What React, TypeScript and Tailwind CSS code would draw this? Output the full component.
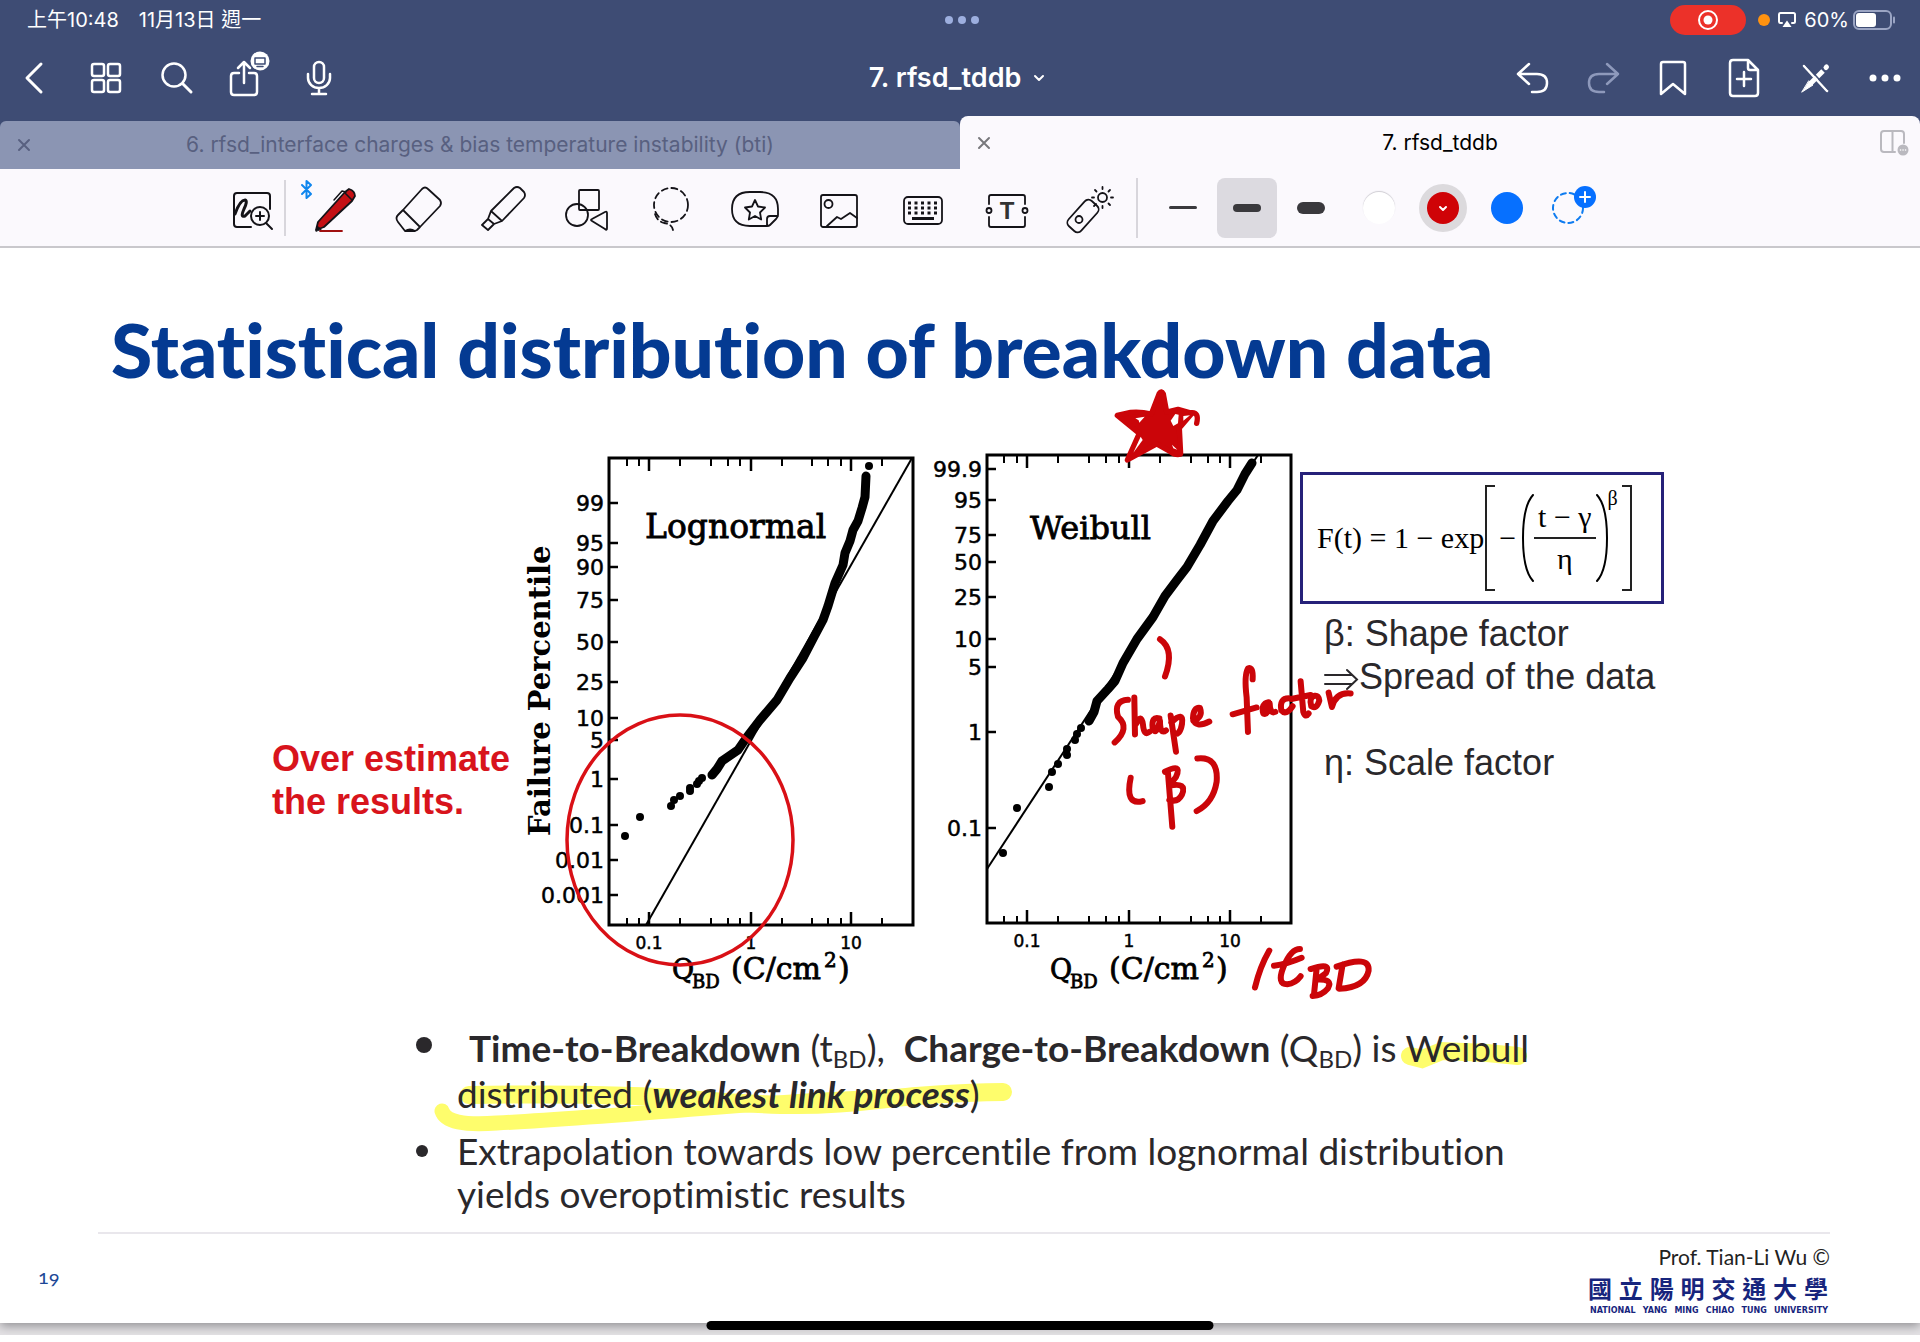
import React from "react";

type IconProps = { children: React.ReactNode; className?: string; w?: number; h?: number; sw?: number };

function Icon({ children, className = "", w = 48, h = 48, sw = 2 }: IconProps) {
  return (
    <svg
      width={w}
      height={h}
      viewBox={`0 0 ${w} ${h}`}
      fill="none"
      stroke="currentColor"
      strokeWidth={sw}
      strokeLinecap="round"
      strokeLinejoin="round"
      className={`shrink-0 overflow-visible ${className}`}
      aria-hidden="true"
    >
      {children}
    </svg>
  );
}

function StatusBar() {
  return (
    <div className="grid h-10 grid-cols-3 items-center pl-[27px] pr-6 text-xl text-white">
      <div className="flex gap-5 font-['Inter','Noto_Sans_CJK_TC',sans-serif]">
        <span>上午10:48</span>
        <span>11月13日 週一</span>
      </div>
      <div className="flex justify-center gap-[5px]">
        <i className="size-2 rounded-full bg-[#9dafdf]" />
        <i className="size-2 rounded-full bg-[#9dafdf]" />
        <i className="size-2 rounded-full bg-[#9dafdf]" />
      </div>
      <div className="flex items-center justify-end">
        <span className="mr-3 flex h-[30px] w-[76px] items-center justify-center rounded-2xl bg-[#ec3129]">
          <Icon w={22} h={22} sw={2}>
            <circle cx="11" cy="11" r="9" />
            <circle cx="11" cy="11" r="4.5" fill="currentColor" stroke="none" />
          </Icon>
        </span>
        <i className="mr-2 size-3 rounded-full bg-[#ff9210]" />
        <Icon w={18} h={18} sw={2} className="mr-2">
          <path d="M4 12H2.500Q1 12 1 10.500V3.500Q1 2 2.500 2H15.500Q17 2 17 3.500V10.500Q17 12 15.500 12H14" />
          <path d="M9 9.500 13.500 16H4.500Z" fill="currentColor" stroke="none" />
        </Icon>
        <span className="mr-1 font-['Inter',sans-serif]">60%</span>
        <Icon w={43} h={20} sw={2}>
          <rect x="1" y="1" width="37" height="18" rx="5" stroke="#9ba5c4" />
          <rect x="3" y="3" width="20" height="14" rx="3" fill="white" stroke="none" />
          <path d="M41 7.500v5" stroke="#9ba5c4" />
        </Icon>
      </div>
    </div>
  );
}

function NavButton({ label, children, className = "" }: { label: string; children: React.ReactNode; className?: string }) {
  return (
    <button type="button" aria-label={label} className={`flex h-16 items-center justify-center ${className}`}>
      {children}
    </button>
  );
}

function NavBar() {
  return (
    <div className="grid h-[76px] grid-cols-[1fr_auto_1fr] items-center text-white">
      <div className="flex items-center">
        <NavButton label="Back" className="w-[67px]">
          <Icon w={36} h={36} sw={3}><path d="M25 4 11 18 25 32" /></Icon>
        </NavButton>
        <NavButton label="Pages" className="w-[78px]">
          <Icon w={36} h={36} sw={2.5}>
            <rect x="4" y="4" width="12" height="12" rx="2" />
            <rect x="20" y="4" width="12" height="12" rx="2" />
            <rect x="4" y="20" width="12" height="12" rx="2" />
            <rect x="20" y="20" width="12" height="12" rx="2" />
          </Icon>
        </NavButton>
        <NavButton label="Search" className="w-[63px]">
          <Icon w={36} h={36} sw={3}>
            <circle cx="15" cy="15" r="11.500" strokeWidth="2.500" />
            <path d="m24 24 8 8" />
          </Icon>
        </NavButton>
        <NavButton label="Share" className="w-[71px]">
          <Icon w={36} h={40} sw={2.5}>
            <path d="M13 15H8Q5 15 5 18V34Q5 37 8 37H28Q31 37 31 34V18Q31 15 28 15H23" />
            <path d="M18 25V5M12 10l6-6 6 6" />
            <circle cx="34" cy="3" r="9.500" fill="white" stroke="none" />
            <path d="M29 0H39V6H29ZM31 8.500H37" stroke="#3e4c74" strokeWidth="1.500" />
          </Icon>
        </NavButton>
        <NavButton label="Record" className="w-[79px]">
          <Icon w={36} h={36} sw={2.5}>
            <rect x="13" y="2" width="10" height="21" rx="5" />
            <path d="M7 14v4a11 10 0 0 0 22 0v-4M18 28v6M11 34H25" />
          </Icon>
        </NavButton>
      </div>
      <button type="button" className="flex items-center gap-3 pr-1.5 font-['Inter',sans-serif] text-[27px] font-semibold">
        7. rfsd_tddb
        <Icon w={12} h={12} sw={2}><path d="m2 4 4 4 4-4" /></Icon>
      </button>
      <div className="flex items-center justify-end">
        <NavButton label="Undo" className="w-[70px]">
          <Icon w={36} h={36} sw={2.5}><path d="M14 4 3 14 14 24M3 14H22Q32 14 32 23T22 32H17" /></Icon>
        </NavButton>
        <NavButton label="Redo" className="w-[70px] text-[#8e99bb]">
          <Icon w={36} h={36} sw={2.5}><path d="M22 4 33 14 22 24M33 14H14Q4 14 4 23T14 32H19" /></Icon>
        </NavButton>
        <NavButton label="Bookmark" className="w-[70px]">
          <Icon w={36} h={36} sw={2.5}><path d="M6 4Q6 2 8 2H28Q30 2 30 4V34L18 24 6 34Z" /></Icon>
        </NavButton>
        <NavButton label="Add page" className="w-[72px]">
          <Icon w={36} h={40} sw={2.5}>
            <path d="M22 2H7Q4 2 4 5V35Q4 38 7 38H29Q32 38 32 35V12ZM22 2V10Q22 12 24 12H32M18 14V28M11 21H25" />
          </Icon>
        </NavButton>
        <NavButton label="Read only" className="w-[70px]">
          <Icon w={36} h={36} sw={2.5}>
            <path d="M7 6 30 31" />
            <path d="M12 21 16 25 5 32Z" fill="currentColor" strokeWidth="1" />
            <path d="M14 23 26 11" strokeWidth="5" strokeLinecap="butt" />
            <path d="M29 7.500 29.500 7" strokeWidth="5" />
            <path d="M9 5 31 29" stroke="#3e4c74" strokeWidth="1.500" />
          </Icon>
        </NavButton>
        <NavButton label="More" className="w-[70px]">
          <Icon w={36} h={36}>
            <g fill="currentColor" stroke="none">
              <circle cx="6" cy="18" r="3.500" /><circle cx="18" cy="18" r="3.500" /><circle cx="30" cy="18" r="3.500" />
            </g>
          </Icon>
        </NavButton>
      </div>
    </div>
  );
}

function Tabs() {
  return (
    <div className="grid h-[53px] grid-cols-2 items-end font-['Inter',sans-serif] text-[21px]">
      <div className="flex h-12 items-center rounded-t-md bg-[#8b95b3] px-[18px] text-[#586080]">
        <button type="button" aria-label="Close tab"><Icon w={12} h={12} sw={2}><path d="M1 1 11 11M11 1 1 11" /></Icon></button>
        <a href="#bti" className="grow pr-3 text-center">6. rfsd_interface charges &amp; bias temperature instability (bti)</a>
      </div>
      <div className="flex h-[53px] items-center rounded-t-lg bg-[#fbf9fd] pl-[18px] pr-3 text-black">
        <button type="button" aria-label="Close tab" className="text-[#78787c]"><Icon w={12} h={12} sw={2}><path d="M1 1 11 11M11 1 1 11" /></Icon></button>
        <a href="#tddb" className="grow pl-2.5 text-center">7. rfsd_tddb</a>
        <button type="button" aria-label="Split view" className="text-[#bab9bf]">
          <Icon w={28} h={26} sw={2}>
            <path d="M15 22H4Q1 22 1 19V4Q1 1 4 1H21Q24 1 24 4V13M12.500 1V22" />
            <circle cx="23" cy="20" r="5.500" fill="currentColor" stroke="none" />
            <path d="M20.500 20h.1M23 20h.1M25.500 20h.1" stroke="white" strokeWidth="1.500" />
          </Icon>
        </button>
      </div>
    </div>
  );
}

const tools: { label: string; art: React.ReactNode }[] = [
  {
    label: "Pen",
    art: (
      <>
        <path d="m-9 1 9 9-4.500 4V-3l4.500 4-9 9" stroke="#0f86ee" strokeWidth="2" />
        <path d="M9 47H31" stroke="#a01010" />
        <path d="M5 46 7 38 34 8 38 5Q44 7 44 12L41 17 13 43Z" fill="#c40f14" />
        <path d="m34 9 7 7M23 16 31 7l4 1" strokeWidth="1.500" />
        <path d="M5 47 6 42 10 45Z" fill="currentColor" strokeWidth="1" />
      </>
    ),
  },
  {
    label: "Eraser",
    art: <path d="M8 26 27 5Q30 2 33 5L45 16Q47 19 45 22L25 43 22 46 20 47H10L3 38Q0 34 3 31ZM8 26 25 43M10 47Q15 44 20 47" />,
  },
  {
    label: "Highlighter",
    art: <path d="M12 27 35 4Q38 2 41 4L45 8Q47 11 45 14L23 37ZM12 27 9 35 15 40 23 37M9 35 3 41 9 46 15 40" />,
  },
  {
    label: "Shapes",
    art: (
      <>
        <rect x="16" y="6" width="20" height="20" rx="1" />
        <circle cx="14" cy="31" r="11" />
        <path d="M29 37Q27 36 29 35L42 28Q44 27 44 29V44Q44 47 42 45Z" />
      </>
    ),
  },
  {
    label: "Lasso",
    art: (
      <>
        <circle cx="24" cy="21" r="17" strokeDasharray="6 4" />
        <path d="M8 30Q10 37 17 39 25 40 26 46" strokeDasharray="6 4" />
      </>
    ),
  },
  {
    label: "Sticker",
    art: (
      <>
        <path d="M36 42H19Q1 42 1 25T19 8H29Q47 8 47 25V31Q47 33 45 35L39 41Q38 42 36 42ZM36 42V35Q36 32 39 32H47" />
        <path d="m24 16 3 6.500 7 1-5 5 1.200 7L24 32l-6.200 3.500 1.200-7-5-5 7-1Z" />
      </>
    ),
  },
  {
    label: "Image",
    art: (
      <>
        <rect x="6" y="11" width="36" height="32" rx="2" />
        <circle cx="13.500" cy="20" r="4" />
        <path d="M12 42 22 33 26 35 35 29 42 34" />
      </>
    ),
  },
  {
    label: "Keyboard",
    art: (
      <>
        <rect x="5" y="13" width="38" height="27" rx="4" />
        <path d="M9 19H40M9 24H40M9 29H40" strokeWidth="3" strokeDasharray="3 3.500" strokeLinecap="butt" />
        <path d="M13 34.500H35" strokeWidth="3" strokeLinecap="butt" />
      </>
    ),
  },
  {
    label: "Text",
    art: (
      <>
        <path d="M6 20V13Q6 11 8 11H40Q42 11 42 13V20M42 33V41Q42 43 40 43H8Q6 43 6 41V33" />
        <circle cx="6" cy="26.500" r="2.500" />
        <circle cx="42" cy="26.500" r="2.500" />
        <text x="24" y="35" textAnchor="middle" fontSize="24" fontWeight="700" fill="#333" stroke="none" fontFamily="Liberation Sans, sans-serif">T</text>
      </>
    ),
  },
  {
    label: "Laser pointer",
    art: (
      <>
        <rect x="-17" y="-8.500" width="34" height="17" rx="5" transform="translate(16 32) rotate(-48)" />
        <circle cx="12" cy="35.500" r="3.500" />
        <circle cx="35.500" cy="13.500" r="4.500" />
        <path d="M35.500 3v2M35.500 22v2M25 13.500h2M44 13.500h2M28 6l1.500 1.500M43 6l-1.500 1.500M43 21l-1.500-1.500M27 22l2-2" />
      </>
    ),
  },
];

function Toolbar() {
  return (
    <div className="flex h-[79px] items-center border-b-2 border-[#c9c8cc] bg-[#fbf9fd] pl-[219px] text-[#141318]">
      <button type="button" aria-label="Zoom window" className="flex w-[65px] justify-center">
        <Icon>
          <path d="M42 25V12Q42 9 39 9H9Q6 9 6 12V40Q6 43 9 43H23" />
          <path d="M7 30Q12 16 17 16 20 17 16 25 12 34 17 32L22 27" strokeWidth="3" />
          <circle cx="32" cy="32" r="9" />
          <path d="m38 39 6 6M28 32h8M32 28v8" />
        </Icon>
      </button>
      <i className="h-14 w-0.5 bg-[#d8d6dc]" />
      <div className="ml-[7px] flex">
        {tools.map((t) => (
          <button key={t.label} type="button" aria-label={t.label} className="flex w-[84px] justify-center">
            <Icon sw={1.8}>{t.art}</Icon>
          </button>
        ))}
      </div>
      <i className="ml-[3px] h-[60px] w-0.5 bg-[#d8d6dc]" />
      <div className="ml-[13px] flex items-center">
        <button type="button" aria-label="Thin stroke" className="flex h-[60px] w-16 items-center justify-center">
          <i className="h-[3px] w-7 rounded-full bg-[#3a393d]" />
        </button>
        <button type="button" aria-label="Medium stroke" className="mx-0.5 flex h-[60px] w-[60px] items-center justify-center rounded-lg bg-[#dcdae0]">
          <i className="h-2 w-7 rounded-full bg-[#3a393d]" />
        </button>
        <button type="button" aria-label="Thick stroke" className="flex h-[60px] w-16 items-center justify-center">
          <i className="h-3 w-7 rounded-full bg-[#3a393d]" />
        </button>
        <button type="button" aria-label="White" className="ml-1 flex w-16 items-center justify-center">
          <i className="size-8 rounded-full bg-white shadow-[0_-1px_1px_#cfcdd3]" />
        </button>
        <button type="button" aria-label="Red" className="flex w-16 items-center justify-center">
          <i className="flex size-12 items-center justify-center rounded-full bg-[#dcdadd]">
            <i className="flex size-8 items-center justify-center rounded-full bg-[#cf0307] text-white">
              <Icon w={8} h={8} sw={2}><path d="m1 3 3 3 3-3" /></Icon>
            </i>
          </i>
        </button>
        <button type="button" aria-label="Blue" className="flex w-16 items-center justify-center">
          <i className="size-8 rounded-full bg-[#0670ff]" />
        </button>
        <button type="button" aria-label="Add colour" className="flex w-[58px] items-center justify-center">
          <Icon w={32} h={32} className="text-[#0f7cf0]">
            <circle cx="16" cy="16" r="15" strokeDasharray="5 4" />
            <circle cx="33" cy="5" r="11" fill="#0670ff" stroke="none" />
            <path d="M28 5h10M33 0v10" stroke="white" />
          </Icon>
        </button>
      </div>
    </div>
  );
}

type PlotProps = {
  left: number; top: number; bottom: number; majors: number[]; minors: number[];
  ticks: [string, number][]; line: string; curve: string; dots: [number, number][];
};

function Plot({ left, top, bottom, majors, minors, ticks, line, curve, dots }: PlotProps) {
  const labels = ["0.1", "1", "10"];
  return (
    <g stroke="black" fill="none">
      <rect x={left} y={top} width="304" height={bottom - top} strokeWidth="3" />
      {majors.map((x) => <path key={x} d={`M${x} ${top}v13M${x} ${bottom}v-13`} strokeWidth="2.500" />)}
      {minors.map((x) => <path key={x} d={`M${x} ${top}v8M${x} ${bottom}v-7`} strokeWidth="2" />)}
      {ticks.map(([t, y]) => (
        <g key={t}>
          <path d={`M${left} ${y}h9`} strokeWidth="2.500" />
          <text x={left - 5} y={y + 8} textAnchor="end" fontSize="22" fill="black" stroke="black" strokeWidth="0.500" fontFamily="DejaVu Sans, sans-serif">{t}</text>
        </g>
      ))}
      <path d={line} strokeWidth="2" />
      <path d={curve} strokeWidth="9" strokeLinecap="round" strokeLinejoin="round" />
      {dots.map(([x, y]) => <circle key={`${x}-${y}`} cx={x} cy={y} r="4" fill="black" stroke="none" />)}
      {majors.map((x, i) => (
        <text key={x} x={x} y={bottom + 24} textAnchor="middle" fontSize="17" fill="black" stroke="black" strokeWidth="0.500" fontFamily="DejaVu Sans, sans-serif">{labels[i]}</text>
      ))}
      <g fill="black" stroke="black" strokeWidth="0.800" fontFamily="DejaVu Serif, serif" fontSize="27">
        <text x={left + 63} y="979">Q</text>
        <text x={left + 83} y="988" fontSize="18">BD</text>
        <text x={left + 122} y="979" fontSize="30">(C/cm</text>
        <text x={left + 215} y="967" fontSize="20">2</text>
        <text x={left + 229} y="979" fontSize="30">)</text>
      </g>
    </g>
  );
}

const inkStrokes = [
  "M720 645Q765 670 735 738",
  "M624 796Q580 798 594 838 632 866 584 902",
  "M643 790 645 882M648 856Q664 828 669 858 672 886 688 876",
  "M718 842Q694 836 698 866 708 888 720 848 720 884 738 872",
  "M752 835 768 925M754 852Q792 822 786 856 780 886 760 880",
  "M820 848Q850 840 840 816 820 814 819 842 826 868 868 850",
  "M998 745Q1000 712 984 718 972 735 980 790L984 876M938 832 1010 815",
  "M1046 802Q1022 806 1030 830 1044 836 1049 804 1050 832 1066 826",
  "M1106 792Q1078 792 1084 822 1098 836 1118 812",
  "M1142 750 1150 826Q1156 842 1166 830M1114 794 1172 784",
  "M1184 786Q1166 790 1174 812 1190 820 1198 798 1196 784 1184 786",
  "M1226 778 1236 814Q1248 776 1292 780",
  "M632 990Q614 1060 668 1048",
  "M744 978 757 1112M735 975Q788 952 768 988L748 1010Q802 1000 786 1032 774 1052 748 1045",
  "M832 942Q896 936 890 1000 880 1052 830 1073",
  "M1048 1420Q1020 1460 1005 1512",
  "M1062 1458Q1100 1454 1145 1438M1140 1416Q1112 1416 1090 1462 1070 1504 1102 1504 1126 1502 1142 1484",
  "M1190 1465 1182 1530M1172 1466Q1236 1448 1218 1476L1192 1492Q1240 1490 1224 1514 1206 1532 1178 1533",
  "M1268 1455 1256 1514M1250 1460Q1350 1430 1346 1470 1336 1512 1258 1515",
];

function Charts() {
  return (
    <svg width="780" height="612" viewBox="520 388 780 612" role="img" aria-label="Lognormal and Weibull plots" className="pointer-events-none relative z-10 shrink-0 overflow-visible">
      <text transform="translate(550 836) rotate(-90)" fontSize="29" fontWeight="700" fontFamily="DejaVu Serif, serif">Failure Percentile</text>
      <Plot
        left={609} top={458} bottom={925}
        majors={[649, 751, 851]}
        minors={[627, 639, 680, 711, 728, 740, 782, 812, 828, 841, 882]}
        ticks={[["99", 503], ["95", 543], ["90", 567], ["75", 600], ["50", 642], ["25", 682], ["10", 718], ["5", 740], ["1", 779], ["0.1", 825], ["0.01", 860], ["0.001", 895]]}
        line="M646 925 912 458"
        curve="M866 476 865 497 862 508 858 521 853 530 850 541 845 553 843 565 835 583 828 606 823 620 815 635 803 658 790 678 777 700 760 720 747 737 738 750 722 761 717 769 712 775"
        dots={[[869, 466], [702, 778], [699, 781], [697, 784], [690, 788], [690, 791], [680, 796], [674, 800], [671, 806], [640, 817], [625, 836]]}
      />
      <text x="645" y="538" fontSize="33" stroke="black" strokeWidth="0.800" fontFamily="DejaVu Serif, serif">Lognormal</text>
      <Plot
        left={987} top={455} bottom={923}
        majors={[1027, 1129, 1230]}
        minors={[1004, 1017, 1058, 1089, 1106, 1119, 1160, 1191, 1208, 1220, 1261]}
        ticks={[["99.9", 469], ["95", 500], ["75", 535], ["50", 562], ["25", 597], ["10", 639], ["5", 667], ["1", 732], ["0.1", 828]]}
        line="M987 869 1258 455"
        curve="M1252 463 1245 474 1237 490 1228 501 1213 521 1200 545 1187 567 1177 580 1165 596 1153 617 1137 639 1123 663 1115 681 1108 689 1097 701 1094 712 1089 721"
        dots={[[1081, 728], [1077, 734], [1075, 740], [1067, 749], [1067, 755], [1058, 764], [1052, 772], [1049, 787], [1017, 808], [1003, 853]]}
      />
      <text x="1030" y="539" fontSize="32" stroke="black" strokeWidth="0.800" fontFamily="DejaVu Serif, serif">Weibull</text>
      <ellipse cx="680" cy="840" rx="113" ry="125" fill="none" stroke="#d91016" strokeWidth="3.500" />
      <g transform="translate(920 380) scale(.3333 .4018)" fill="none" stroke="#cb0509" strokeLinecap="round" strokeLinejoin="round">
        {inkStrokes.map((d) => <path key={d} d={d} strokeWidth="6" vectorEffect="non-scaling-stroke" />)}
      </g>
      <g transform="translate(1110 380) scale(.3333)" stroke="#cb0509" strokeWidth="16" strokeLinecap="round" strokeLinejoin="round">
        <path fill="#cb0509" d="M22 106 62 97Q92 94 124 102L148 40Q154 30 160 42L170 96 204 88 246 100 208 144 212 222Q198 228 180 214L140 192 52 240 88 160Z" />
        <path fill="none" d="M244 98Q268 96 260 130" />
        <g fill="white" stroke="none">
          <path d="M182 122 196 102 206 104 204 130 190 138Z" />
          <path d="M220 108 240 106 220 122Z" />
          <path d="M76 115 104 110 88 128 86 121Z" />
          <path d="M70 218 92 170 98 180Z" />
          <path d="M186 194 202 209 190 205Z" />
        </g>
      </g>
    </svg>
  );
}

function Formula() {
  return (
    <div className="flex h-[132px] items-center border-[3px] border-[#262179] pl-3.5 font-['Liberation_Serif',serif] text-3xl text-black">
      <span className="whitespace-nowrap">F(t) = 1 − exp</span>
      <i className="ml-px h-[106px] w-2.5 border-y-2 border-l-2 border-[#222]" />
      <span className="ml-1">−</span>
      <Icon w={12} h={88} sw={2} className="ml-1.5"><path d="M11 1Q1 12 1 44T11 87" /></Icon>
      <span className="flex flex-col items-center leading-10">
        <span className="border-b-2 border-[#222] px-1 whitespace-nowrap">t − γ</span>
        <span>η</span>
      </span>
      <Icon w={12} h={88} sw={2}><path d="M1 1Q11 12 11 44T1 87" /></Icon>
      <sup className="-top-10 text-xl">β</sup>
      <i className="ml-1 h-[106px] w-2.5 border-y-2 border-r-2 border-[#222]" />
    </div>
  );
}

function Slide() {
  return (
    <article className="bg-white pt-[62px] text-[#2a282b] shadow-[0_3px_10px_#8f8e92] [font-variant-ligatures:none]">
      <h1 className="pl-[111px] font-['Lato',sans-serif] text-[75px] leading-[78px] font-black text-[#043a92]">
        Statistical distribution of breakdown data
      </h1>
      <div className="flex items-start">
        <p className="mt-[349px] ml-[272px] w-[248px] shrink-0 font-['Liberation_Sans',sans-serif] text-[36px] leading-[43px] font-bold whitespace-nowrap text-[#d8141c]">
          Over estimate<br />the results.
        </p>
        <Charts />
        <div className="mt-[84px] w-[364px] shrink-0">
          <Formula />
          <div className="mt-2 pl-6 font-['Liberation_Sans',sans-serif] text-[36px] leading-[43px] whitespace-nowrap">
            <p>β: Shape factor</p>
            <p className="flex items-center">
              <Icon w={35} h={24} sw={2}><path d="M1 10H28M1 19H28M23 5 33 14.500 23 24" strokeLinejoin="miter" /></Icon>
              Spread of the data
            </p>
            <p className="mt-[43px]">η: Scale factor</p>
          </div>
        </div>
      </div>
      <ul className="mt-[25px] ml-[416px] font-['Lato',sans-serif] text-[37px] whitespace-nowrap">
        <li className="flex">
          <i className="mt-3 size-4 shrink-0 rounded-full bg-[#2a282b]" />
          <p className="relative isolate ml-[25px] leading-[46px]">
            <svg className="absolute top-0 left-0 -z-10 overflow-visible" width="1100" height="110" fill="none" stroke="#fefd6c" strokeLinecap="round" aria-hidden="true">
              <path d="M953 31 965 34 985 26 1030 28 1061 31" strokeWidth="18" />
              <path d="M12 70Q160 68 230 74T340 80 430 74 546 67" strokeWidth="18" />
              <path d="M-15 86Q-10 102 40 98 100 95 250 83T546 68" strokeWidth="15" />
            </svg>
            <span className="pl-3"><b>Time-to-Breakdown</b> (t<sub className="text-2xl">BD</sub>),&nbsp; <b>Charge-to-Breakdown</b> (Q<sub className="text-2xl">BD</sub>) is Weibull</span>
            <br />
            distributed (<b><em>weakest link process</em></b>)
          </p>
        </li>
        <li className="mt-3 flex">
          <i className="mt-4 size-3 shrink-0 rounded-full bg-[#2a282b]" />
          <p className="ml-[29px] leading-[43px]">
            Extrapolation towards low percentile from lognormal distribution
            <br />
            yields overoptimistic results
          </p>
        </li>
      </ul>
      <footer className="mt-[17px] mr-[90px] ml-[98px] flex h-[91px] items-start justify-between border-t-2 border-[#e9e7ec]">
        <span className="mt-7 -ml-[60px] font-['Lato',sans-serif] text-xl text-[#1c4796] [font-variant-numeric:oldstyle-nums]">19</span>
        <div className="mt-[9px] flex flex-col items-end">
          <p className="font-['Lato',sans-serif] text-[21px] leading-7 text-[#222]">Prof. Tian-Li Wu ©</p>
          <p className="mr-0.5 flex w-[240px] justify-between font-['Noto_Sans_CJK_TC',sans-serif] text-2xl leading-[34px] font-bold text-[#17257d]">
            {"國立陽明交通大學".split("").map((c) => <span key={c}>{c}</span>)}
          </p>
          <p className="mr-0.5 flex w-[238px] justify-between font-['DejaVu_Sans',sans-serif] text-[8px] leading-3 font-bold text-[#17257d]">
            {"NATIONAL YANG MING CHIAO TUNG UNIVERSITY".split(" ").map((c) => <span key={c}>{c}</span>)}
          </p>
        </div>
      </footer>
    </article>
  );
}

export default function App() {
  return (
    <div className="relative min-h-screen overflow-hidden bg-white">
      <header className="bg-[#3e4c74]">
        <StatusBar />
        <NavBar />
        <Tabs />
      </header>
      <Toolbar />
      <main className="overflow-hidden bg-[#e4e2e5] pb-3">
        <Slide />
      </main>
      <i className="absolute bottom-3 left-1/2 h-[9px] w-[507px] -translate-x-1/2 rounded-full bg-black" />
    </div>
  );
}
